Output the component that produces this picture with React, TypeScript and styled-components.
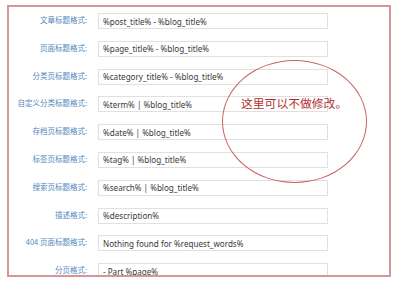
import React from "react";
import styled, { createGlobalStyle } from "styled-components";

const GlobalStyle = createGlobalStyle`
  html, body {
    margin: 0;
    padding: 0;
    background: #ffffff;
  }
`;

const Page = styled.div`
  width: 400px;
  height: 284px;
  padding: 5px 0 0 7px;
  box-sizing: border-box;
`;

const Frame = styled.div`
  position: relative;
  width: 384px;
  height: 272px;
  box-sizing: border-box;
  border: 2px solid #d69596;
  overflow: hidden;
  padding-top: 6px;
`;

const Form = styled.div`
  display: grid;
  grid-template-columns: 78px 230px;
  grid-auto-rows: 16px;
  column-gap: 11px;
  row-gap: 11.8px;
`;

const Label = styled.label`
  justify-self: end;
  align-self: center;
  margin-top: -3px;
  font-family: "Noto Sans CJK SC", "Noto Sans", sans-serif;
  font-size: 7.5px;
  color: #5089c0;
  white-space: nowrap;
`;

const Field = styled.input`
  width: 100%;
  height: 16px;
  box-sizing: border-box;
  margin: 0;
  padding: 0 4px;
  border: 1px solid #e0e0e0;
  background: #ffffff;
  font-family: "Noto Sans", "Open Sans", sans-serif;
  font-size: 8.1px;
  color: #3a3a3a;
  outline: none;
`;

const Note = styled.div`
  position: absolute;
  left: 213px;
  top: 53px;
  width: 145px;
  height: 123px;
  box-sizing: border-box;
  border: 1px solid #cc6264;
  border-radius: 50%;
  padding: 35px 0 0 18px;
  font-family: "Noto Sans CJK SC", sans-serif;
  font-size: 11.8px;
  line-height: 14px;
  color: #b1302f;
  white-space: nowrap;
`;

const rows: [string, string][] = [
  ["文章标题格式:", "%post_title% - %blog_title%"],
  ["页面标题格式:", "%page_title% - %blog_title%"],
  ["分类页标题格式:", "%category_title% - %blog_title%"],
  ["自定义分类标题格式:", "%term% | %blog_title%"],
  ["存档页标题格式:", "%date% | %blog_title%"],
  ["标签页标题格式:", "%tag% | %blog_title%"],
  ["搜索页标题格式:", "%search% | %blog_title%"],
  ["描述格式:", "%description%"],
  ["404 页面标题格式:", "Nothing found for %request_words%"],
  ["分页格式:", "- Part %page%"],
];

export default function App() {
  return (
    <Page>
      <GlobalStyle />
      <Frame>
        <Form>
          {rows.map(([label, value]) => (
            <React.Fragment key={label}>
              <Label>{label}</Label>
              <Field readOnly value={value} />
            </React.Fragment>
          ))}
        </Form>
        <Note>这里可以不做修改。</Note>
      </Frame>
    </Page>
  );
}
